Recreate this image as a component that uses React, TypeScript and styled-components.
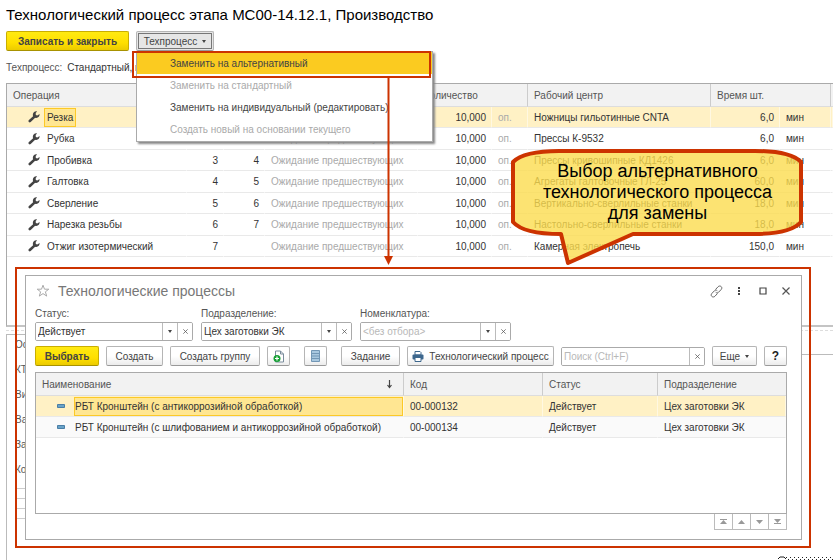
import React from "react";
import styled, { createGlobalStyle } from "styled-components";

const Global = createGlobalStyle`
  * { box-sizing: border-box; }
  body { margin: 0; background: #fff; overflow: hidden; }
  body, button, input, table {
    font-family: "Liberation Sans", Arial, sans-serif;
    font-size: 10px;
    color: #444;
  }
`;

const Page = styled.main`
  position: relative;
  min-height: 100vh;
  overflow: hidden;
  padding: 6px 0 0 6px;
  display: flex;
  flex-direction: column;
`;
const Title = styled.h1`
  margin: 0;
  font-size: 15px;
  line-height: 17px;
  font-weight: 400;
  color: #000;
`;
const Toolbar = styled.div`
  display: flex;
  gap: 7px;
  margin-top: 8px;
`;
const Button = styled.button<{ $kind?: "primary" | "focus" }>`
  display: flex;
  align-items: center;
  justify-content: center;
  gap: 5px;
  height: 20px;
  flex: none;
  padding: 0;
  white-space: nowrap;
  border: 1px solid ${(p) => (p.$kind === "primary" ? "#c9ae00" : "#b5b5b5")};
  border-bottom-color: ${(p) => (p.$kind === "primary" ? "#a89200" : "#999")};
  border-radius: 2px;
  color: #444;
  font-weight: ${(p) => (p.$kind === "primary" ? 700 : 400)};
  background: ${(p) =>
    p.$kind === "primary"
      ? "linear-gradient(#ffea12, #ffdf00 60%, #eccb00)"
      : p.$kind === "focus"
      ? "#e6e6e6"
      : "linear-gradient(#fff 50%, #ececec)"};
  outline: ${(p) => (p.$kind === "focus" ? "1px solid #777" : "none")};
  outline-offset: -3px;
`;
const SaveButton = styled(Button)` width: 123px; `;
const MenuAnchor = styled.div` position: relative; `;
const MenuButton = styled(Button)` width: 78px; `;
const Caret = styled.span`
  border: 2px solid transparent;
  border-top: 3px solid #444;
  border-bottom: 0;
`;
const Menu = styled.div`
  position: absolute;
  z-index: 2;
  top: 20px;
  left: 0;
  width: 297px;
  padding-bottom: 1px;
  background: #fff;
  border: 1px solid #aaa;
  box-shadow: 2px 2px 2px #888;
`;
const MenuItem = styled.button<{ $active?: boolean }>`
  display: block;
  width: 100%;
  height: 22px;
  padding: 0 0 0 33px;
  border: 0;
  text-align: left;
  white-space: nowrap;
  background: ${(p) => (p.$active ? "#fbcb20" : "#fff")};
  color: #444;
  &:disabled { color: #aaa; }
`;
const MenuMark = styled.div`
  position: absolute;
  top: -1px;
  left: -5px;
  right: 1px;
  height: 27px;
  border: 2px solid #cc3300;
  pointer-events: none;
`;
const Caption = styled.p`
  margin: 10px 0 0;
  line-height: 13px;
  color: #555;
  white-space: nowrap;
`;
const CaptionValue = styled.span`
  margin-left: 2px;
  color: #333;
`;

const TableFrame = styled.div<{ $height: number }>`
  height: ${(p) => p.$height}px;
  border: 1px solid #aaa;
`;
const MainFrame = styled(TableFrame)`
  margin-top: 9px;
  border-right: 0;
  border-bottom: 2px solid #c4c4c4;
`;
const Table = styled.table`
  width: 100%;
  table-layout: fixed;
  border-collapse: separate;
  border-spacing: 0;
  white-space: nowrap;
`;
const Col = styled.col<{ $w?: number }>`
  width: ${(p) => (p.$w ? p.$w + "px" : "auto")};
`;
const Th = styled.th<{ $line?: boolean }>`
  height: 23px;
  padding: 0 6px;
  text-align: left;
  font-weight: 400;
  color: #555;
  background: #f2f2f2;
  border-bottom: 1px solid #ddd;
  border-right: ${(p) => (p.$line ? "1px solid #ccc" : "0")};
`;
const Tr = styled.tr<{ $selected?: boolean; $shade?: boolean }>`
  height: 21px;
  background: ${(p) => (p.$selected ? "#fff1c5" : p.$shade ? "#fafafa" : "#fff")};
  td { border-right: 1px solid ${(p) => (p.$selected ? "#fff8e2" : "transparent")}; }
`;
const MainTr = styled(Tr)`
  &:nth-child(even) { height: 22px; }
`;
const Td = styled.td<{ $right?: boolean; $muted?: boolean }>`
  padding: 0 5px 0 6px;
  line-height: 13px;
  overflow: hidden;
  text-align: ${(p) => (p.$right ? "right" : "left")};
  color: ${(p) => (p.$muted ? "#aaa" : "#333")};
  border-bottom: 1px solid #e9e9e9;
`;
const OperationTd = styled(Td)` padding: 0 0 0 21px; `;
const Operation = styled.div`
  display: flex;
  align-items: center;
  gap: 4px;
`;
const OperationName = styled.span<{ $selected?: boolean }>`
  padding: 2px;
  border: 1px solid ${(p) => (p.$selected ? "#fcc927" : "transparent")};
  background: ${(p) => (p.$selected ? "#ffe692" : "transparent")};
`;

const LowerArea = styled.div`
  flex: 1;
  display: flex;
  gap: 12px;
  margin-top: 3px;
  padding-top: 3px;
  border-top: 1px dashed #ddd;
`;
const LeftPanel = styled.section`
  flex: 1;
  border: 1px solid #bbb;
  border-right: 0;
  border-bottom: 0;
  padding: 3px 8px;
`;
const RightPanel = styled.section`
  flex: 1;
  margin-top: 20px;
  border-top: 1px solid #bbb;
`;
const PanelLabel = styled.div`
  height: 25px;
  line-height: 13px;
  color: #555;
`;
const PanelLine = styled.div`
  height: 10px;
  border-top: 1px solid #ccc;
`;

const Highlight = styled.div`
  position: absolute;
  z-index: 3;
  top: 267px;
  left: 15px;
  right: 22px;
  bottom: 12px;
  padding: 6px 7px 6px 8px;
  border: 2px solid #cc3300;
`;
const Dialog = styled.section`
  height: 100%;
  display: flex;
  flex-direction: column;
  padding: 6px 14px 9px 9px;
  border: 1px solid #aaa;
  background: #fff;
`;
const DialogHead = styled.header`
  display: flex;
  align-items: center;
  height: 18px;
`;
const DialogTitle = styled.h2`
  flex: 1;
  margin: 0 0 0 8px;
  font-size: 14px;
  font-weight: 400;
  color: #777;
`;
const WindowTools = styled.div`
  display: flex;
  gap: 8px;
  margin-right: -6px;
`;
const IconButton = styled.button`
  width: 15px;
  height: 16px;
  display: grid;
  place-items: center;
  padding: 0;
  border: 0;
  background: none;
`;
const Filters = styled.div`
  display: flex;
  gap: 8px;
  margin-top: 7px;
`;
const Filter = styled.div<{ $w: number }>`
  width: ${(p) => p.$w}px;
`;
const FilterLabel = styled.label`
  display: block;
  height: 15px;
  line-height: 13px;
  color: #555;
`;
const Field = styled.div`
  display: flex;
  height: 19px;
  border: 1px solid #aaa;
  border-radius: 2px;
  overflow: hidden;
`;
const Input = styled.input`
  flex: 1;
  min-width: 0;
  padding: 0 2px;
  border: 0;
  outline: 0;
  color: #333;
  &::placeholder { color: #b8b8b8; opacity: 1; }
`;
const FieldButton = styled.button`
  width: 15px;
  display: grid;
  place-items: center;
  padding: 0;
  border: 0;
  border-left: 1px solid #bbb;
  background: #fff;
  color: #555;
`;
const Commands = styled.div`
  display: flex;
  align-items: center;
  gap: 7px;
  margin: 5px 0 6px;
`;
const Command = styled(Button)<{ $w: number; $after?: number }>`
  width: ${(p) => p.$w}px;
  margin-right: ${(p) => p.$after || 0}px;
`;
const HelpCommand = styled(Command)`
  font-size: 12px;
  font-weight: 700;
  color: #222;
`;
const Search = styled(Field)` flex: 1; `;
const ListFrame = styled.div`
  flex: 1;
  border: 1px solid #aaa;
`;
const SortTh = styled.div`
  display: flex;
  justify-content: space-between;
  padding-right: 4px;
`;
const NameTd = styled(Td)` padding: 0 0 0 21px; `;
const NameCell = styled.div`
  display: flex;
  align-items: center;
  gap: 9px;
  svg { flex: none; }
`;
const NameText = styled.span<{ $selected?: boolean }>`
  flex: 1;
  padding: 2px 0;
  border: 1px solid ${(p) => (p.$selected ? "#fcc927" : "transparent")};
  background: ${(p) => (p.$selected ? "#ffe692" : "transparent")};
`;
const Pager = styled.div`
  display: flex;
  justify-content: flex-end;
`;
const PagerButton = styled.button`
  width: 19px;
  height: 16px;
  margin-left: -1px;
  display: grid;
  place-items: center;
  padding: 0;
  border: 1px solid #bbb;
  border-top: 0;
  background: #fff;
`;

const ArrowLine = styled.svg`
  position: absolute;
  z-index: 4;
  left: 382px;
  top: 77px;
  pointer-events: none;
`;
const Callout = styled.aside`
  position: absolute;
  z-index: 4;
  left: 510px;
  top: 147px;
  width: 295px;
  height: 120px;
`;
const CalloutShape = styled.svg`
  position: absolute;
  inset: 0;
`;
const CalloutText = styled.p`
  position: relative;
  margin: 14px 0 0;
  text-align: center;
  font-size: 18px;
  line-height: 21px;
  color: #000;
`;
const TornEdge = styled.svg`
  position: absolute;
  right: 0;
  bottom: 0;
`;

const Wrench = () => (
  <svg width="12" height="12" viewBox="0 0 12 12" aria-hidden="true">
    <path d="M1.8 10 6.800 5.400" stroke="#444" strokeWidth="2.600" strokeLinecap="round" />
    <path d="M9 .4 7.700 1.900l.1 2 1.500.6 2.300-1.500c.2 2.100-1.300 3.800-3.300 3.900-2 0-3.500-1.300-3.500-3C4.800 1.800 6.700 0 9 .4Z" fill="#444" />
  </svg>
);
const Star = () => (
  <svg width="14" height="14" viewBox="0 0 14 14" fill="none" stroke="#aaa" aria-hidden="true">
    <path d="m7 1.200 1.500 4h4.300L9.400 7.800l1.300 4.300L7 9.600l-3.700 2.500 1.300-4.300L1.200 5.200h4.300Z" />
  </svg>
);
const LinkIcon = () => (
  <svg width="13" height="13" viewBox="0 0 13 13" fill="none" stroke="#666" aria-hidden="true">
    <path d="M5.500 4.500 8 1.800c1-1 2.300-1 3.200-.2s.8 2.100-.1 3L8.500 7.300c-.8.800-2 .8-2.800 0M7.500 8.500 5 11.200c-1 1-2.300 1-3.200.2s-.8-2.100.1-3l2.600-2.700c.8-.8 2-.8 2.800 0" />
  </svg>
);
const Dots = () => (
  <svg width="3" height="10" viewBox="0 0 3 10" fill="#444" aria-hidden="true">
    <path d="M0 1h2v2H0zM0 4h2v2H0zM0 7h2v2H0z" />
  </svg>
);
const Square = () => (
  <svg width="8" height="8" viewBox="0 0 8 8" aria-hidden="true">
    <path d="M1 1h6v6H1z" fill="none" stroke="#444" strokeWidth="1.200" />
  </svg>
);
const Cross = ({ size }: { size: number }) => (
  <svg width={size} height={size} viewBox="0 0 8 8" aria-hidden="true">
    <path d="m.5.5 7 7m0-7-7 7" stroke="#555" strokeWidth="1.200" />
  </svg>
);
const AddPage = () => (
  <svg width="12" height="13" viewBox="0 0 12 13" aria-hidden="true">
    <path d="M2.500 1h5l3 3v8h-8z" fill="#fff" stroke="#7a8c9c" />
    <path d="M7.500 1v3h3" fill="none" stroke="#7a8c9c" />
    <circle cx="4" cy="8.500" r="3.500" fill="#17a035" />
    <path d="M4 6.500v4M2 8.500h4" stroke="#fff" strokeWidth="1.200" />
  </svg>
);
const ListIcon = () => (
  <svg width="9" height="12" viewBox="0 0 9 12" aria-hidden="true">
    <path d="M.5.5h8v11h-8z" fill="#a9c8df" stroke="#7397b5" />
    <path d="M1 3.500h7M1 6h7M1 8.500h7" stroke="#7397b5" />
  </svg>
);
const PrinterSvg = styled.svg` flex: none; `;
const Printer = () => (
  <PrinterSvg width="12" height="11" viewBox="0 0 12 11" aria-hidden="true">
    <path d="M3 .5h5l1 1V4H3z" fill="#fff" stroke="#3d678d" />
    <rect x=".5" y="3.500" width="11" height="5" rx="1" fill="#3d678d" />
    <path d="M3 6.500h6v4H3z" fill="#fff" stroke="#3d678d" />
  </PrinterSvg>
);
const Dash = () => (
  <svg width="8" height="4" viewBox="0 0 8 4" aria-hidden="true">
    <path d="M.5.5h7v3h-7z" fill="#69a3c8" stroke="#4a7ea6" />
  </svg>
);
const SortArrow = () => (
  <svg width="7" height="10" viewBox="0 0 7 10" aria-hidden="true">
    <path d="M3.500 1v7M1.500 6l2 2.500 2-2.500" fill="none" stroke="#444" strokeWidth="1.200" />
  </svg>
);
const pagerPaths = [
  "M1 1h7v1H1zM4.500 2 8 6H1z",
  "M4.500 2 8 6H1z",
  "M1 2h7L4.500 6z",
  "M1 1h7L4.500 5zM1 5h7v1H1z",
];
const pagerNames = ["В начало", "Вверх", "Вниз", "В конец"];

const operations = [
  ["Резка", "1", "2", "", "Ножницы гильотинные CNTA", "6,0"],
  ["Рубка", "2", "4", "Ожидание предшествующих", "Прессы К-9532", "6,0"],
  ["Пробивка", "3", "4", "Ожидание предшествующих", "Прессы кривошипные КД1426", "6,0"],
  ["Галтовка", "4", "5", "Ожидание предшествующих", "Агрегаты галтовочные ГЛ-25", "60,0"],
  ["Сверление", "5", "6", "Ожидание предшествующих", "Вертикально-сверлильные станки", "18,0"],
  ["Нарезка резьбы", "6", "7", "Ожидание предшествующих", "Настольно-сверлильные станки", "18,0"],
  ["Отжиг изотермический", "7", "", "Ожидание предшествующих", "Камерная электропечь", "150,0"],
];
const processes = [
  ["РБТ Кронштейн (с антикоррозийной обработкой)", "00-000132"],
  ["РБТ Кронштейн (с шлифованием и антикоррозийной обработкой)", "00-000134"],
];
const filters = [
  { id: "status", label: "Статус:", value: "Действует", w: 158 },
  { id: "unit", label: "Подразделение:", value: "Цех заготовки ЭК", w: 151 },
  { id: "item", label: "Номенклатура:", value: "", w: 151 },
];

export default function App() {
  return (
    <>
      <Global />
      <Page>
        <Title>Технологический процесс этапа МС00-14.12.1, Производство</Title>
        <Toolbar>
          <SaveButton $kind="primary">Записать и закрыть</SaveButton>
          <MenuAnchor>
            <MenuButton $kind="focus" aria-haspopup="menu" aria-expanded="true">
              Техпроцесс <Caret />
            </MenuButton>
            <Menu role="menu">
              <MenuItem role="menuitem" $active>Заменить на альтернативный</MenuItem>
              <MenuItem role="menuitem" disabled>Заменить на стандартный</MenuItem>
              <MenuItem role="menuitem">Заменить на индивидуальный (редактировать)</MenuItem>
              <MenuItem role="menuitem" disabled>Создать новый на основании текущего</MenuItem>
              <MenuMark />
            </Menu>
          </MenuAnchor>
        </Toolbar>
        <Caption>
          Техпроцесс: <CaptionValue>Стандартный, п</CaptionValue>
        </Caption>
        <MainFrame $height={244}>
          <Table>
            <colgroup>
              <Col $w={180} /><Col $w={37} /><Col $w={41} /><Col $w={153} /><Col $w={74} />
              <Col $w={36} /><Col /><Col $w={69} /><Col $w={51} /><Col $w={2} />
            </colgroup>
            <thead>
              <tr>
                <Th>Операция</Th><Th /><Th /><Th $line />
                <Th colSpan={2} $line>Количество</Th>
                <Th $line>Рабочий центр</Th>
                <Th colSpan={2} $line>Время шт.</Th>
                <Th />
              </tr>
            </thead>
            <tbody>
              {operations.map(([name, from, to, state, center, time], i) => (
                <MainTr key={name} $selected={i === 0}>
                  <OperationTd>
                    <Operation><Wrench /><OperationName $selected={i === 0}>{name}</OperationName></Operation>
                  </OperationTd>
                  <Td $right>{from}</Td>
                  <Td $right>{to}</Td>
                  <Td $muted>{state}</Td>
                  <Td $right>10,000</Td>
                  <Td $muted>оп.</Td>
                  <Td>{center}</Td>
                  <Td $right>{time}</Td>
                  <Td>мин</Td>
                  <Td />
                </MainTr>
              ))}
            </tbody>
          </Table>
        </MainFrame>
        <LowerArea>
          <LeftPanel>
            {["Ос", "КТ", "Ви", "Ва", "За", "Ко"].map((t) => <PanelLabel key={t}>{t}</PanelLabel>)}
            <PanelLine /><PanelLine /><PanelLine /><PanelLine />
          </LeftPanel>
          <RightPanel />
        </LowerArea>

        <Highlight>
          <Dialog role="dialog" aria-labelledby="dialog-title">
            <DialogHead>
              <IconButton aria-label="В избранное"><Star /></IconButton>
              <DialogTitle id="dialog-title">Технологические процессы</DialogTitle>
              <WindowTools>
                <IconButton aria-label="Ссылка"><LinkIcon /></IconButton>
                <IconButton aria-label="Меню"><Dots /></IconButton>
                <IconButton aria-label="Развернуть"><Square /></IconButton>
                <IconButton aria-label="Закрыть"><Cross size={8} /></IconButton>
              </WindowTools>
            </DialogHead>
            <Filters>
              {filters.map((f) => (
                <Filter key={f.id} $w={f.w}>
                  <FilterLabel htmlFor={f.id}>{f.label}</FilterLabel>
                  <Field>
                    <Input id={f.id} defaultValue={f.value} placeholder="<без отбора>" />
                    <FieldButton aria-label="Выбрать из списка"><Caret /></FieldButton>
                    <FieldButton aria-label="Очистить"><Cross size={5} /></FieldButton>
                  </Field>
                </Filter>
              ))}
            </Filters>
            <Commands>
              <Command $w={64} $kind="primary">Выбрать</Command>
              <Command $w={57}>Создать</Command>
              <Command $w={90}>Создать группу</Command>
              <Command $w={23} $after={7} aria-label="Создать копированием"><AddPage /></Command>
              <Command $w={23} $after={7} aria-label="Список"><ListIcon /></Command>
              <Command $w={59}>Задание</Command>
              <Command $w={147}><Printer />Технологический процесс</Command>
              <Search>
                <Input aria-label="Поиск" placeholder="Поиск (Ctrl+F)" />
                <FieldButton aria-label="Очистить поиск"><Cross size={5} /></FieldButton>
              </Search>
              <Command $w={45}>Еще <Caret /></Command>
              <HelpCommand $w={23}>?</HelpCommand>
            </Commands>
            <ListFrame>
              <Table>
                <colgroup>
                  <Col /><Col $w={139} /><Col $w={115} /><Col $w={128} />
                </colgroup>
                <thead>
                  <tr>
                    <Th $line><SortTh>Наименование <SortArrow /></SortTh></Th>
                    <Th $line>Код</Th>
                    <Th $line>Статус</Th>
                    <Th>Подразделение</Th>
                  </tr>
                </thead>
                <tbody>
                  {processes.map(([name, code], i) => (
                    <Tr key={code} $selected={i === 0} $shade={i === 1}>
                      <NameTd>
                        <NameCell><Dash /><NameText $selected={i === 0}>{name}</NameText></NameCell>
                      </NameTd>
                      <Td>{code}</Td>
                      <Td>Действует</Td>
                      <Td>Цех заготовки ЭК</Td>
                    </Tr>
                  ))}
                </tbody>
              </Table>
            </ListFrame>
            <Pager>
              {pagerPaths.map((d, i) => (
                <PagerButton key={d} aria-label={pagerNames[i]}>
                  <svg width="9" height="7" viewBox="0 0 9 7" aria-hidden="true"><path d={d} fill="#999" /></svg>
                </PagerButton>
              ))}
            </Pager>
          </Dialog>
        </Highlight>

        <ArrowLine width="13" height="189" viewBox="0 0 13 189" aria-hidden="true">
          <path d="M6.500 0v180" stroke="#cc3300" strokeWidth="2" />
          <path d="M2 179h9l-4.500 9z" fill="#cc3300" />
        </ArrowLine>
        <Callout>
          <CalloutShape width="295" height="120" viewBox="0 0 295 120" aria-hidden="true">
            <path
              d="M49 4H245C267 4 284 8 291 15V75C284 83 267 87 245 87H123L58 116 51 87C28 87 10 83 3 75V15C10 8 27 4 49 4Z"
              fill="#fbdc4f" fillOpacity=".8" stroke="#cc3300" strokeWidth="4" strokeLinejoin="round"
            />
          </CalloutShape>
          <CalloutText>
            Выбор альтернативного<br />технологического процесса<br />для замены
          </CalloutText>
        </Callout>
        <TornEdge width="56" height="4" viewBox="0 0 56 4" aria-hidden="true">
          <path d="M1 3 3 1h4l2 2" fill="none" stroke="#222" />
          <path d="M9 1.500h47M11 3.500h45" stroke="#222" strokeDasharray="1 3" />
        </TornEdge>
      </Page>
    </>
  );
}
